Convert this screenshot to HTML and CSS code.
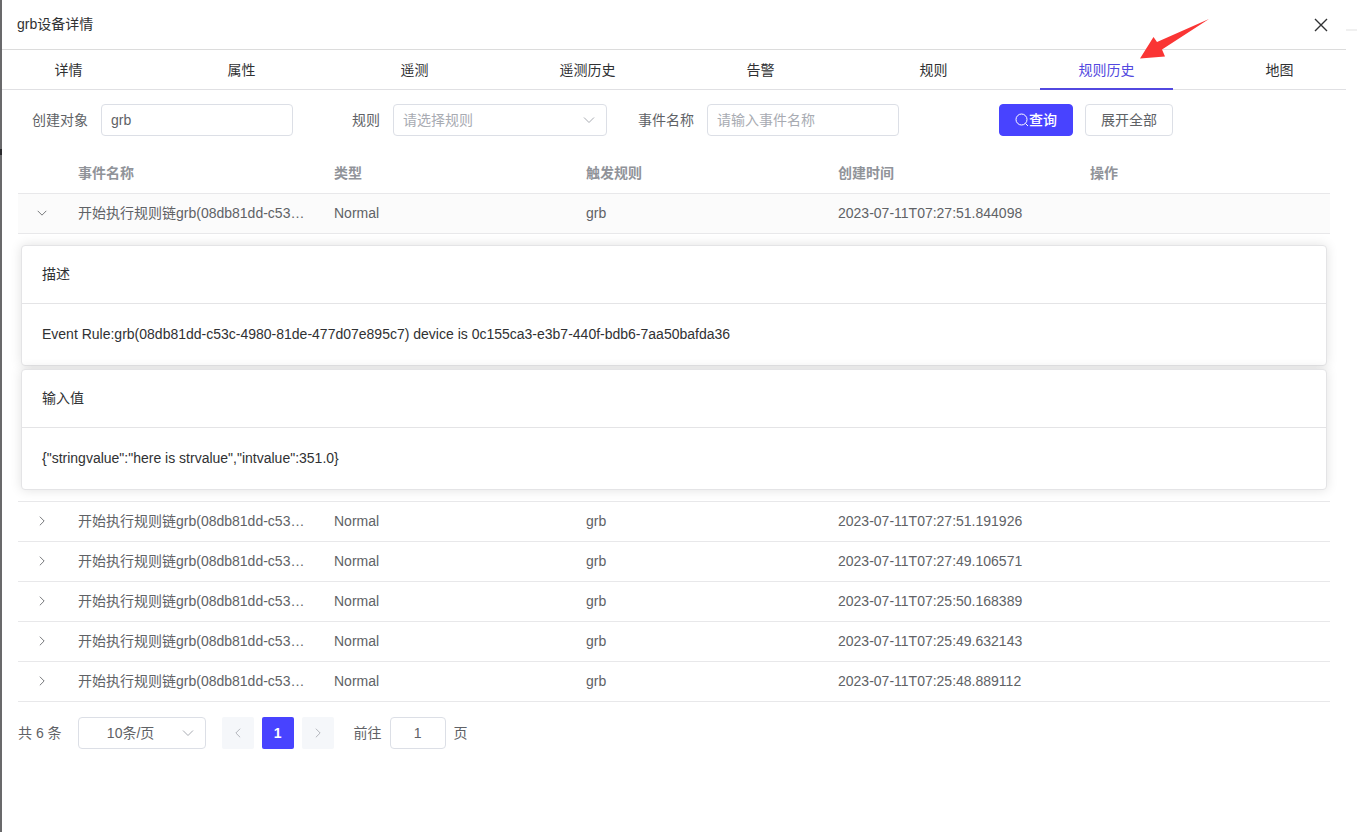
FILE: index.html
```
<!DOCTYPE html>
<html lang="zh-CN">
<head>
  <meta charset="UTF-8">
  <meta name="viewport" content="width=device-width, initial-scale=1.0">
  <title>grb设备详情</title>
  <link rel="stylesheet" href="styles.css">
</head>
<body>
  <!-- Shared icons -->
  <svg class="sprite" aria-hidden="true">
    <symbol id="icon-down" viewBox="0 0 14 14"><path d="M2 4.500l5 5 5-5"/></symbol>
    <symbol id="icon-right" viewBox="0 0 14 14"><path d="M4.500 2l5 5-5 5"/></symbol>
    <symbol id="icon-left" viewBox="0 0 14 14"><path d="M9.500 2l-5 5 5 5"/></symbol>
  </svg>

  <div class="page">
    <div class="mask"><span class="mask-mark"></span></div>
    <main class="drawer">
      <header class="drawer-header">
        <h1>grb设备详情</h1>
        <button class="close-btn" type="button" aria-label="关闭">
          <svg viewBox="0 0 20 20"><path d="M4 4l12 12M16 4L4 16"/></svg>
        </button>
      </header>

      <nav class="tabs">
        <a href="#detail">详情</a>
        <a href="#attribute">属性</a>
        <a href="#telemetry">遥测</a>
        <a href="#telemetry-history">遥测历史</a>
        <a href="#alarm">告警</a>
        <a href="#rule">规则</a>
        <a href="#rule-history" class="active">规则历史
          <svg class="pointer" viewBox="0 0 70 40" aria-hidden="true"><path d="M0 39.500L13.500 18 17 23 69 0 22 30.500 25 37.500z"/></svg>
        </a>
        <a href="#map">地图</a>
      </nav>

      <div class="content">
        <form class="search-form">
          <div class="form-item">
            <label for="creator">创建对象</label>
            <input type="text" id="creator" value="grb">
          </div>
          <div class="form-item">
            <label for="rule">规则</label>
            <div class="select-box rule-select">
              <select id="rule" class="empty">
                <option>请选择规则</option>
              </select>
              <svg class="icon"><use href="#icon-down"/></svg>
            </div>
          </div>
          <div class="form-item">
            <label for="eventName">事件名称</label>
            <input type="text" id="eventName" placeholder="请输入事件名称">
          </div>
          <div class="form-actions">
            <button class="btn btn-primary" type="button">
              <svg viewBox="0 0 14 14"><circle cx="6.500" cy="6.500" r="5.500"/><path d="M10.500 10.500L13 13"/></svg>查询
            </button>
            <button class="btn" type="button">展开全部</button>
          </div>
        </form>

        <table class="event-table">
          <colgroup>
            <col class="col-expand">
            <col class="col-name">
            <col>
            <col>
            <col>
            <col>
          </colgroup>
          <thead>
            <tr>
              <th></th>
              <th>事件名称</th>
              <th>类型</th>
              <th>触发规则</th>
              <th>创建时间</th>
              <th>操作</th>
            </tr>
          </thead>
          <tbody>
            <tr class="expanded">
              <td><button class="expand-btn" type="button" aria-label="收起"><svg class="icon"><use href="#icon-down"/></svg></button></td>
              <td>开始执行规则链grb(08db81dd-c53c-4980-81de-477d07e895c7)</td>
              <td>Normal</td>
              <td>grb</td>
              <td>2023-07-11T07:27:51.844098</td>
              <td></td>
            </tr>
            <tr class="detail-row">
              <td colspan="6">
                <div class="cards">
                  <section class="card">
                    <h2>描述</h2>
                    <p>Event Rule:grb(08db81dd-c53c-4980-81de-477d07e895c7) device is 0c155ca3-e3b7-440f-bdb6-7aa50bafda36</p>
                  </section>
                  <section class="card">
                    <h2>输入值</h2>
                    <p>{"stringvalue":"here is strvalue","intvalue":351.0}</p>
                  </section>
                </div>
              </td>
            </tr>
            <tr>
              <td><button class="expand-btn" type="button" aria-label="展开"><svg class="icon"><use href="#icon-right"/></svg></button></td>
              <td>开始执行规则链grb(08db81dd-c53c-4980-81de-477d07e895c7)</td>
              <td>Normal</td>
              <td>grb</td>
              <td>2023-07-11T07:27:51.191926</td>
              <td></td>
            </tr>
            <tr>
              <td><button class="expand-btn" type="button" aria-label="展开"><svg class="icon"><use href="#icon-right"/></svg></button></td>
              <td>开始执行规则链grb(08db81dd-c53c-4980-81de-477d07e895c7)</td>
              <td>Normal</td>
              <td>grb</td>
              <td>2023-07-11T07:27:49.106571</td>
              <td></td>
            </tr>
            <tr>
              <td><button class="expand-btn" type="button" aria-label="展开"><svg class="icon"><use href="#icon-right"/></svg></button></td>
              <td>开始执行规则链grb(08db81dd-c53c-4980-81de-477d07e895c7)</td>
              <td>Normal</td>
              <td>grb</td>
              <td>2023-07-11T07:25:50.168389</td>
              <td></td>
            </tr>
            <tr>
              <td><button class="expand-btn" type="button" aria-label="展开"><svg class="icon"><use href="#icon-right"/></svg></button></td>
              <td>开始执行规则链grb(08db81dd-c53c-4980-81de-477d07e895c7)</td>
              <td>Normal</td>
              <td>grb</td>
              <td>2023-07-11T07:25:49.632143</td>
              <td></td>
            </tr>
            <tr>
              <td><button class="expand-btn" type="button" aria-label="展开"><svg class="icon"><use href="#icon-right"/></svg></button></td>
              <td>开始执行规则链grb(08db81dd-c53c-4980-81de-477d07e895c7)</td>
              <td>Normal</td>
              <td>grb</td>
              <td>2023-07-11T07:25:48.889112</td>
              <td></td>
            </tr>
          </tbody>
        </table>

        <div class="pagination">
          <span>共 6 条</span>
          <div class="select-box size-select">
            <select aria-label="每页条数">
              <option>10条/页</option>
            </select>
            <svg class="icon"><use href="#icon-down"/></svg>
          </div>
          <div class="pager">
            <button type="button" aria-label="上一页" disabled><svg class="icon"><use href="#icon-left"/></svg></button>
            <button type="button" class="current">1</button>
            <button type="button" aria-label="下一页" disabled><svg class="icon"><use href="#icon-right"/></svg></button>
          </div>
          <div class="jump">
            <label for="jumpPage">前往</label>
            <input type="text" id="jumpPage" value="1">
            <span>页</span>
          </div>
        </div>
      </div>
    </main>
    <aside class="gutter"></aside>
  </div>
</body>
</html>
```
FILE: styles.css
```
* {
  box-sizing: border-box;
}
body {
  margin: 0;
  font-family: "Liberation Sans", "Noto Sans CJK SC", sans-serif;
  font-size: 14px;
  line-height: 20px;
  color: #606266;
  background: #fff;
}
h1, h2, p {
  margin: 0;
  font-size: 14px;
  font-weight: normal;
}
button, input, select {
  font: inherit;
  color: inherit;
}
button {
  padding: 0;
  border: none;
  background: none;
  cursor: pointer;
}
svg {
  fill: none;
  stroke: currentColor;
}
.sprite {
  display: none;
}
.icon {
  width: 14px;
  height: 14px;
}

/* Page frame */
.page {
  display: flex;
  min-height: 100vh;
}
.mask {
  width: 2px;
  padding-top: 149px;
  background: #69696b;
}
.mask-mark {
  display: block;
  height: 6px;
  background: #2b2b2d;
}
.drawer {
  flex: 1;
  min-width: 0;
}
.gutter {
  width: 11px;
  padding-top: 29px;
}
.gutter::before {
  content: "";
  display: block;
  height: 2px;
  background: #f0f0f0;
}
.drawer-header {
  display: flex;
  align-items: center;
  justify-content: space-between;
  height: 50px;
  padding: 0 15px;
  border-bottom: 1px solid #dcdcdc;
  color: #303133;
}
.drawer-header h1 {
  padding-bottom: 2px;
}
.close-btn {
  width: 20px;
  height: 20px;
  color: #303133;
}
.close-btn svg {
  display: block;
  stroke-width: 1.4;
}

/* Tabs */
.tabs {
  display: flex;
  gap: 40px;
  height: 40px;
  border-bottom: 1px solid #e0e0e3;
}
.tabs a {
  position: relative;
  flex: 1;
  height: 40px;
  line-height: 40px;
  text-align: center;
  text-decoration: none;
  color: #303133;
}
.tabs .active {
  color: #5248e0;
  border-bottom: 2px solid #5248e0;
}
.pointer {
  position: absolute;
  right: -37px;
  bottom: 29px;
  width: 70px;
  height: 40px;
  fill: #fa3534;
  stroke: none;
}

/* Search form */
.content {
  padding: 14px 16px;
}
.search-form {
  display: flex;
  gap: 32px;
  padding-left: 15px;
}
.form-item {
  display: flex;
}
.form-item label {
  width: 69px;
  margin-left: -1px;
  padding-right: 13px;
  line-height: 32px;
  text-align: right;
  white-space: nowrap;
}
input, select {
  height: 32px;
  padding: 0 9px;
  border: 1px solid #dcdfe6;
  border-radius: 4px;
  background: #fff;
  outline: none;
}
.form-item input {
  width: 192px;
}
input::placeholder {
  color: #a8abb2;
}
.select-box {
  position: relative;
}
.select-box select {
  width: 100%;
  appearance: none;
}
.select-box .empty {
  color: #a8abb2;
}
.select-box .icon {
  position: absolute;
  top: 9px;
  right: 11px;
  color: #a8abb2;
  pointer-events: none;
}
.rule-select {
  width: 214px;
}
.form-actions {
  display: flex;
  gap: 12px;
  padding-left: 68px;
}
.btn {
  display: flex;
  align-items: center;
  height: 32px;
  padding: 0 15px;
  border: 1px solid #dcdfe6;
  border-radius: 4px;
  white-space: nowrap;
}
.btn svg {
  width: 14px;
  height: 14px;
}
.btn-primary {
  border-color: #4843ff;
  background: #4843ff;
  color: #fff;
  font-weight: 500;
}

/* Events table */
.event-table {
  width: 100%;
  margin-top: 17px;
  table-layout: fixed;
  border-collapse: separate;
  border-spacing: 0;
}
.col-expand {
  width: 48px;
}
.col-name {
  width: 256px;
}
.event-table th, .event-table td {
  height: 40px;
  padding: 0 12px;
  border-bottom: 1px solid #e8e8ea;
  text-align: left;
  overflow: hidden;
  text-overflow: ellipsis;
  white-space: nowrap;
}
.event-table td {
  padding-bottom: 2px;
}
.event-table th {
  height: 41px;
  color: #909399;
  font-weight: bold;
}
.expanded td {
  background: #fbfbfb;
}
.expand-btn {
  display: block;
  width: 24px;
  height: 20px;
}
.expand-btn .icon {
  display: block;
  width: 12px;
  height: 12px;
  margin: 0 auto;
}
.event-table .detail-row td {
  padding: 11px 3px;
  overflow: visible;
}
.cards {
  display: grid;
  gap: 3px;
}
.card {
  border: 1px solid #e4e4e6;
  border-radius: 4px;
  background: #fff;
  box-shadow: 0 0 12px rgba(0, 0, 0, 0.12);
  color: #303133;
}
.card h2 {
  padding: 18px 20px;
  border-bottom: 1px solid #e4e4e6;
  line-height: 21px;
}
.card p {
  padding: 20px;
  line-height: 21px;
}

/* Pagination */
.pagination {
  display: flex;
  align-items: center;
  gap: 16px;
  margin-top: 15px;
}
.size-select {
  width: 128px;
}
.size-select select {
  padding: 0 32px 0 10px;
  text-align: center;
  text-align-last: center;
}
.pager {
  display: flex;
  gap: 8px;
}
.pager button {
  display: flex;
  align-items: center;
  justify-content: center;
  width: 32px;
  height: 32px;
  border-radius: 2px;
  background: #f5f7fa;
  color: #a8abb2;
}
.pager .icon {
  width: 12px;
  height: 12px;
}
.pager .current {
  background: #4843ff;
  color: #fff;
  font-weight: bold;
}
.jump {
  display: flex;
  align-items: center;
  gap: 8px;
  padding-left: 4px;
}
.jump input {
  width: 56px;
  text-align: center;
}
```
